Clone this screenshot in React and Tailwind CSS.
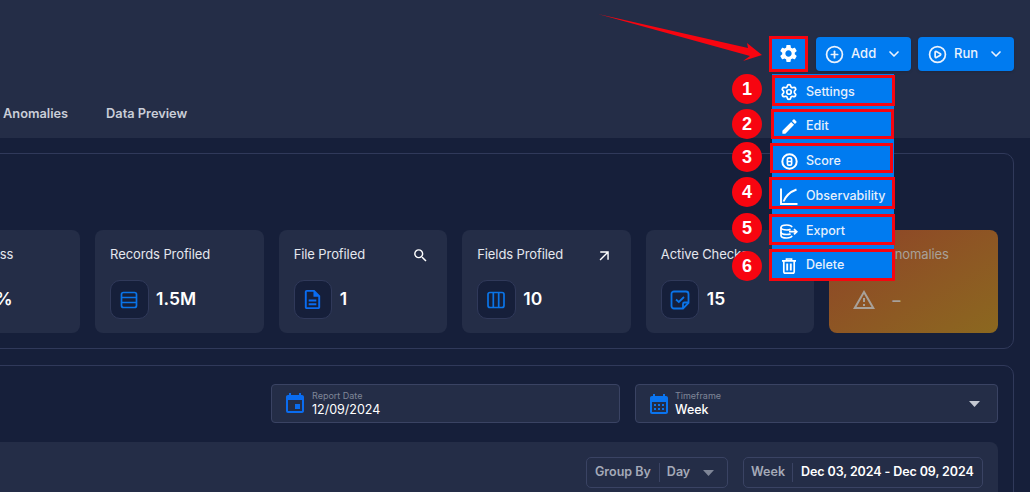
import { ChevronDown, CirclePlus, CirclePlay, Settings } from 'lucide-react';
import {
  MdSettings,
  MdEdit,
  MdSearch,
  MdArrowOutward,
  MdOutlineDescription,
  MdOutlineWarningAmber,
  MdEvent,
  MdCalendarMonth,
} from 'react-icons/md';

const FONT = "font-['Inter','Liberation_Sans',sans-serif]";

function TableIcon() {
  return (
    <svg width="18" height="18" viewBox="0 0 18 18" fill="none" stroke="#0A74E8" strokeWidth="1.7">
      <rect x="1.500" y="1.500" width="15" height="15" rx="2" />
      <path d="M1.500 6.500h15M1.500 11.500h15" />
    </svg>
  );
}

function ColumnsIcon() {
  return (
    <svg width="18" height="18" viewBox="0 0 18 18" fill="none" stroke="#0A74E8" strokeWidth="1.7">
      <rect x="1" y="1.500" width="16" height="15" rx="2" />
      <path d="M6.300 1.500v15M11.700 1.500v15" />
    </svg>
  );
}

function ChecksIcon() {
  return (
    <svg width="20" height="20" viewBox="0 0 20 20" fill="none" stroke="#0A74E8" strokeWidth="1.8">
      <path d="M4 1.500h12a2.500 2.500 0 0 1 2.500 2.500v9l-5.500 5.500H4A2.500 2.500 0 0 1 1.500 16V4A2.500 2.500 0 0 1 4 1.500z" />
      <path d="M18.500 12.500h-4a1.500 1.500 0 0 0-1.500 1.500v4.500" />
      <path d="M6 9.500l2.800 2.500L14 7" />
    </svg>
  );
}

function ScoreIcon() {
  return (
    <svg width="17" height="17" viewBox="0 0 17 17" fill="none" stroke="white">
      <circle cx="8.500" cy="8.500" r="7.200" strokeWidth="2" />
      <rect x="6.400" y="4.800" width="4.200" height="7.400" rx="1.400" strokeWidth="1.700" />
      <path d="M6.400 8.500h4.200" strokeWidth="1.400" />
    </svg>
  );
}

function ObservabilityIcon() {
  return (
    <svg width="18" height="17" viewBox="0 0 18 17" fill="none" stroke="white" strokeWidth="1.900">
      <path d="M1 0.500V16h16.500" />
      <path d="M3.500 13.500C5.500 8.500 8.500 4.500 16.500 1.500" />
    </svg>
  );
}

function ExportIcon() {
  return (
    <svg width="18" height="15" viewBox="0 0 18 15" fill="none" stroke="white" strokeWidth="1.700">
      <path d="M12 3.200C11.500 1.800 9.500 1 6.800 1 3.600 1 1 2 1 3.500v8C1 13 3.600 14 6.800 14c2.700 0 4.700-.8 5.200-2.200" />
      <path d="M1 3.500C1 5 3.600 6 6.800 6c1.500 0 2.800-.2 3.800-.6M1 8c0 1.500 2.600 2.500 5.800 2.500 1.500 0 2.800-.2 3.800-.6" />
      <path d="M9 7.700h7.500M14 5l2.800 2.700L14 10.400" />
    </svg>
  );
}

function TrashIcon() {
  return (
    <svg width="14" height="16" viewBox="0 0 14 16" fill="none" stroke="white" strokeWidth="1.700">
      <path d="M0 2.800h14M4.500 2.800V1h5v1.800" />
      <path d="M1.800 2.800v11a1.400 1.400 0 0 0 1.400 1.400h7.600a1.400 1.400 0 0 0 1.400-1.400v-11" />
      <path d="M5.200 5.500v7M8.800 5.500v7" strokeWidth="1.900" />
    </svg>
  );
}

function Caret({ className }) {
  return (
    <svg width="11" height="6" viewBox="0 0 11 6" className={className}>
      <path d="M0 0h11L5.500 6z" fill="currentColor" />
    </svg>
  );
}

function StatCard({ title, value, icon, corner }) {
  return (
    <div className="flex-1 h-[103px] rounded-[8px] bg-[#242D47] px-[15px] pt-[15px]">
      <div className="flex items-center justify-between h-[20px]">
        <span className="text-[13px] text-[#E4E7EE] whitespace-nowrap tracking-[-0.1px]">{title}</span>
        {corner}
      </div>
      <div className="mt-[15px] flex items-center gap-[7.500px]">
        <div className="flex h-[39px] w-[38.500px] shrink-0 items-center justify-center rounded-[10px] border border-[#30395A] bg-[#161F3A]">
          {icon}
        </div>
        <span className="text-[17.500px] font-semibold text-white">{value}</span>
      </div>
    </div>
  );
}

function HeaderButton({ icon, label, className }) {
  return (
    <button className={`flex h-[34px] items-center rounded-[4px] bg-[#007BF0] text-[13px] font-medium text-[#EAF2FD] shadow ${className}`}>
      {icon}
      <span className="ml-[7px]">{label}</span>
      <ChevronDown size={16} strokeWidth={2.500} className="ml-auto" />
    </button>
  );
}

const MENU = [
  { label: 'Settings', icon: <Settings size={18} strokeWidth={2.300} />, box: 'left-[772px] top-[75px] w-[123px] h-[31px] pl-[4px] pt-[3px]' },
  { label: 'Edit', icon: <MdEdit size={19} />, box: 'left-[771px] top-[109px] w-[123px] h-[30px] pl-[5px] pt-[4px]' },
  { label: 'Score', icon: <ScoreIcon />, box: 'left-[770px] top-[143px] w-[123px] h-[30px] pl-[6px] pt-[6px]' },
  { label: 'Observability', icon: <ObservabilityIcon />, box: 'left-[769px] top-[177px] w-[126px] h-[32px] pl-[7px] pt-[6px]' },
  { label: 'Export', icon: <ExportIcon />, box: 'left-[769px] top-[214px] w-[126px] h-[31px] pl-[7px] pt-[3px]' },
  { label: 'Delete', icon: <TrashIcon />, box: 'left-[769px] top-[249px] w-[126px] h-[32px] pl-[7px] pt-[1px]' },
];

const BADGES = [
  { n: 1, pos: 'top-[74px]' },
  { n: 2, pos: 'top-[109px]' },
  { n: 3, pos: 'top-[142px]' },
  { n: 4, pos: 'top-[177px]' },
  { n: 5, pos: 'top-[213px]' },
  { n: 6, pos: 'top-[251px]' },
];

export default function App() {
  return (
    <div className={`relative h-[492px] w-[1030px] overflow-hidden bg-[#161F3A] ${FONT}`}>
      <header className="flex h-[138px] flex-col bg-[#242D47]">
        <div className="flex h-[71px] items-end justify-end gap-[7px] pr-[16px]">
          <div className="mb-[-1px] mr-[1px] flex h-[36px] w-[39px] items-center justify-center border-[3px] border-[#F70510] bg-[#007BF0] pb-[1px] text-white">
            <MdSettings size={21} />
          </div>
          <HeaderButton icon={<CirclePlus size={19} strokeWidth={2.200} />} label="Add" className="w-[95px] px-[9px]" />
          <HeaderButton icon={<CirclePlay size={19} strokeWidth={2.200} />} label="Run" className="w-[96px] px-[10px]" />
        </div>
        <nav className="mt-[33px] flex gap-[38px] pl-[3px] text-[12.800px] font-semibold text-[#C9CDD8]">
          <span>Anomalies</span>
          <span>Data Preview</span>
        </nav>
      </header>

      <section className="ml-[-104.500px] mr-[16px] mt-[15px] h-[196px] rounded-[10px] border border-[#30395A] px-[15px] pt-[76px]">
        <div className="flex gap-[15px]">
          <StatCard title="Completeness" value="99%" icon={<TableIcon />} />
          <StatCard title="Records Profiled" value="1.5M" icon={<TableIcon />} />
          <StatCard
            title="File Profiled"
            value="1"
            icon={<MdOutlineDescription size={23} className="text-[#0A6CF0]" />}
            corner={<MdSearch size={17} className="text-white -translate-x-[3px]" />}
          />
          <StatCard
            title="Fields Profiled"
            value="10"
            icon={<ColumnsIcon />}
            corner={<MdArrowOutward size={17} className="text-white -translate-x-[3px]" />}
          />
          <StatCard title="Active Checks" value="15" icon={<ChecksIcon />} />
          <div className="h-[103px] flex-1 rounded-[8px] bg-gradient-to-br from-[#8E4227] to-[#8B681F] px-[15px] pt-[15px]">
            <div className="h-[20px] text-[13px] tracking-[-0.1px] whitespace-nowrap text-[#A8A199]">Active Anomalies</div>
            <div className="mt-[15px] flex h-[39px] items-center gap-[16px] pl-[8px] text-[#A8A199]">
              <MdOutlineWarningAmber size={24} />
              <span className="text-[16px] font-semibold">–</span>
            </div>
          </div>
        </div>
      </section>

      <section className="ml-[-104.500px] mr-[16px] mt-[16px] h-[200px] rounded-[10px] border border-[#30395A] px-[15px] pt-[18px]">
        <div className="flex justify-end gap-[15px]">
          <div className="flex h-[39px] w-[349px] items-center rounded-[4px] border border-[#3A4363] bg-[#242D47] pl-[11px]">
            <MdEvent size={24} className="text-[#0A6CF0]" />
            <div className="ml-[5px] flex flex-col">
              <span className="text-[9px] leading-[10px] text-[#7F8697]">Report Date</span>
              <span className="mt-[1px] text-[12.500px] leading-[15px] text-white">12/09/2024</span>
            </div>
          </div>
          <div className="flex h-[39px] w-[363px] items-center rounded-[4px] border border-[#3A4363] bg-[#242D47] pl-[11px] pr-[17px]">
            <MdCalendarMonth size={24} className="text-[#0A74F0]" />
            <div className="ml-[4px] flex flex-col">
              <span className="text-[9px] leading-[10px] text-[#7F8697]">Timeframe</span>
              <span className="mt-[1px] text-[12.500px] font-medium leading-[15px] text-white">Week</span>
            </div>
            <Caret className="ml-auto text-[#C4C8D2]" />
          </div>
        </div>

        <div className="mt-[19px] flex h-[60px] justify-end gap-[15px] rounded-[8px] bg-[#242D47] pr-[15px] pt-[15px]">
          <div className="flex h-[31px] w-[142px] items-center rounded-[5px] border border-[#3A4363] pl-[8px] text-[12.500px] font-semibold text-[#A5AAB8]">
            <span>Group By</span>
            <span className="ml-[8px] mr-[7px] h-[19px] w-px bg-[#3A4363]" />
            <span>Day</span>
            <Caret className="ml-[13px] text-[#7F8697]" />
          </div>
          <div className="flex h-[31px] w-[240px] items-center rounded-[5px] border border-[#3A4363] pl-[7px] text-[12.500px] font-semibold">
            <span className="text-[#A5AAB8]">Week</span>
            <span className="mx-[7px] h-[19px] w-px bg-[#3A4363]" />
            <span className="ml-[1px] whitespace-nowrap tracking-[-0.1px] text-white">Dec 03, 2024 - Dec 09, 2024</span>
          </div>
        </div>
      </section>

      {/* annotations and open menu sit on top of the page */}
      <div className="absolute left-[772px] top-[74px] h-[206px] w-[122px] bg-[#007BF0]" />
      {MENU.map((item) => (
        <div
          key={item.label}
          className={`absolute flex items-center border-[3px] border-[#F70510] bg-[#007BF0] text-white ${item.box}`}
        >
          <span className="flex w-[20px] justify-center">{item.icon}</span>
          <span className="ml-[7px] text-[12.500px] font-medium text-[#E6F0FC]">{item.label}</span>
        </div>
      ))}
      {BADGES.map((b) => (
        <div
          key={b.n}
          className={`absolute left-[732px] flex h-[30px] w-[30px] items-center justify-center rounded-full bg-[#F70510] pt-[1px] font-['Liberation_Sans',sans-serif] text-[18px] font-bold text-white ${b.pos}`}
        >
          {b.n}
        </div>
      ))}
      <svg className="absolute left-0 top-0" width="1030" height="492" fill="none">
        <path d="M598 14L748 48L747 43L762 55L743 61L750 56z" fill="#F70510" />
      </svg>
    </div>
  );
}
